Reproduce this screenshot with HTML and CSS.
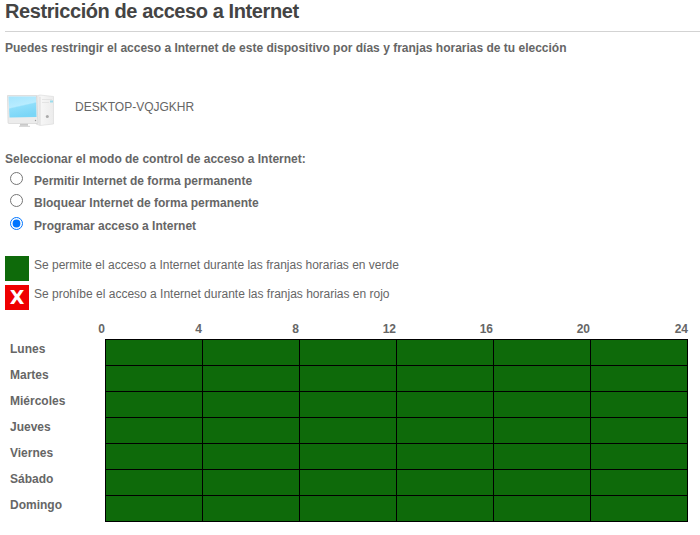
FILE: index.html
```html
<!DOCTYPE html>
<html lang="es">
<head>
<meta charset="utf-8">
<title>Restricción de acceso a Internet</title>
<link rel="stylesheet" href="styles.css">
</head>
<body>
<header class="head"><h1>Restricción de acceso a Internet</h1></header>
<p class="intro"><span>Puedes restringir el acceso a Internet de este dispositivo por días y franjas horarias de tu elección</span></p>
<section class="device">
  <svg class="pc" width="50" height="36" viewBox="0 0 50 36" aria-hidden="true">
    <defs>
      <linearGradient id="screen" x1="0" y1="0" x2=".3" y2="1">
        <stop offset="0" stop-color="#a5e5fd"/><stop offset=".5" stop-color="#b8ecff"/><stop offset=".56" stop-color="#8fdefa"/><stop offset="1" stop-color="#7ad6f7"/>
      </linearGradient>
      <linearGradient id="tower" x1="0" y1="0" x2="1" y2="0">
        <stop offset="0" stop-color="#e2e2e2"/><stop offset=".3" stop-color="#f6f6f6"/><stop offset="1" stop-color="#ececec"/>
      </linearGradient>
    </defs>
    <path d="M29 2l4-1 13.500 1.500V30L33 31.500 29 30z" fill="url(#tower)" stroke="#d8d8d8" stroke-width=".6"/>
    <path d="M33 3v28" stroke="#d5d5d5" stroke-width=".7"/>
    <path d="M35 5.500h10M35 8.500h7" stroke="#e0e0e0" stroke-width=".8"/>
    <path d="M43 6.500h3v2h-3z" fill="#9bdcec"/>
    <circle cx="40.300" cy="22.500" r="1.500" fill="#aaa"/>
    <path d="M.5 1.500h29l1.500 27q0 1-1 1H2q-1 0-1-1z" fill="#ececec" stroke="#d0d0d0" stroke-width=".6"/>
    <path d="M1.500 2.500h27.500l.5 20.500-27 .5z" fill="url(#screen)"/>
    <circle cx="28.500" cy="26.500" r=".7" fill="#999"/>
    <path d="M13 29.800h8v2h-8z" fill="#c9c9c9"/>
    <path d="M12 32.300h11" stroke="#d0d0d0"/>
  </svg>
  <span>DESKTOP-VQJGKHR</span>
</section>
<form class="modes">
  <p class="question">Seleccionar el modo de control de acceso a Internet:</p>
  <label class="mode"><input type="radio" name="mode"><span>Permitir Internet de forma permanente</span></label>
  <label class="mode"><input type="radio" name="mode"><span>Bloquear Internet de forma permanente</span></label>
  <label class="mode last"><input type="radio" name="mode" checked><span>Programar acceso a Internet</span></label>
</form>
<ul class="legend">
  <li><i class="swatch"></i><span>Se permite el acceso a Internet durante las franjas horarias en verde</span></li>
  <li><b class="swatch denied">X</b><span>Se prohíbe el acceso a Internet durante las franjas horarias en rojo</span></li>
</ul>
<table class="schedule">
  <thead><tr><th>0</th><th>4</th><th>8</th><th>12</th><th>16</th><th>20</th><th>24</th></tr></thead>
  <tbody>
    <tr><th>Lunes</th><td></td><td></td><td></td><td></td><td></td><td></td></tr>
    <tr><th>Martes</th><td></td><td></td><td></td><td></td><td></td><td></td></tr>
    <tr><th>Miércoles</th><td></td><td></td><td></td><td></td><td></td><td></td></tr>
    <tr><th>Jueves</th><td></td><td></td><td></td><td></td><td></td><td></td></tr>
    <tr><th>Viernes</th><td></td><td></td><td></td><td></td><td></td><td></td></tr>
    <tr><th>Sábado</th><td></td><td></td><td></td><td></td><td></td><td></td></tr>
    <tr><th>Domingo</th><td></td><td></td><td></td><td></td><td></td><td></td></tr>
  </tbody>
</table>
</body>
</html>
```
FILE: styles.css
```css
* { box-sizing: border-box; }
body {
  margin: 0;
  padding-left: 5px;
  height: 535px;
  overflow: hidden;
  background: #fff;
  color: #666;
  font: 12px/16px "Liberation Sans", Arial, sans-serif;
}
h1, p, ul { margin: 0; padding: 0; }
.head { height: 32px; border-bottom: 1px solid #d3d3d3; }
h1 { color: #444; font-size: 20px; line-height: 23px; letter-spacing: -0.41px; }
.intro { padding-top: 8px; height: 61px; font-weight: bold; }
.device { display: flex; height: 58px; }
.pc { margin: 1px 18px 0 2px; }
.device span { padding-top: 6px; }
.modes { height: 105px; font-weight: bold; }
.question { height: 20px; }
.mode { display: flex; height: 22px; }
.mode input { width: 13px; height: 13px; margin: 1px 11px 0 5px; }
.mode span { padding-top: 2px; }
.mode.last { padding-top: 1px; }
.legend { list-style: none; }
.legend li { display: flex; gap: 5px; height: 29px; }
.legend span { padding-top: 1px; }
.swatch {
  display: flex;
  align-items: center;
  justify-content: center;
  width: 24px;
  height: 25px;
  background: #0e6a0a;
}
.swatch.denied {
  background: #ef0000;
  color: #fff;
  font: bold 19px/25px "DejaVu Sans", Verdana, sans-serif;
}
.schedule {
  width: 683px;
  margin-top: 5px;
  border-spacing: 0;
  border-collapse: separate;
  table-layout: fixed;
}
.schedule th, .schedule td { padding: 0; }
.schedule thead th { width: 97px; height: 20px; text-align: right; vertical-align: top; line-height: 20px; }
.schedule thead th:first-child { width: 100px; }
.schedule thead th:last-child { width: 98px; }
.schedule tbody th { height: 26px; padding: 2px 0 0 5px; text-align: left; vertical-align: top; }
.schedule td {
  height: 26px;
  background: #0e6a0a;
  border-left: 1px solid #000;
  border-top: 1px solid #000;
}
.schedule td:last-child { border-right: 1px solid #000; }
.schedule tbody tr:last-child td { height: 27px; border-bottom: 1px solid #000; }
```
